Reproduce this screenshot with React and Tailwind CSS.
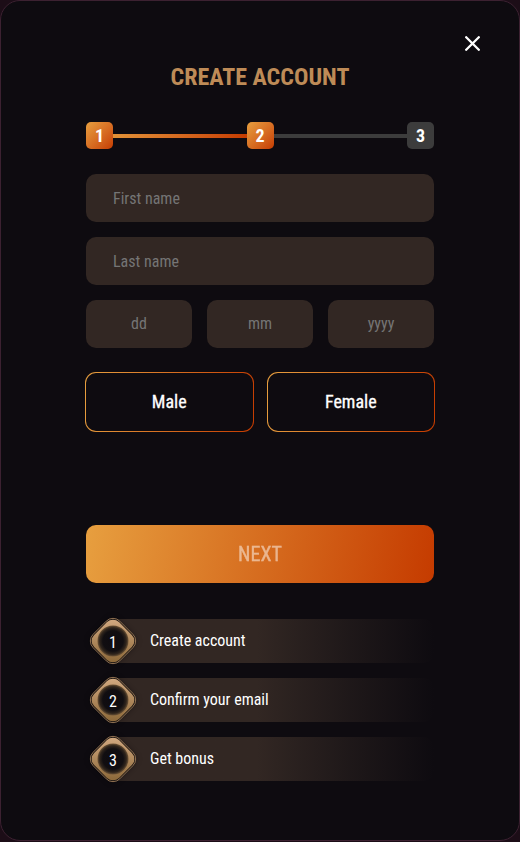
const FIELD = "h-12 w-full min-w-0 rounded-[10px] bg-[#322723] text-base text-white outline-none placeholder:text-[#757575]";

function CloseIcon() {
  return (
    <svg width="15" height="15" viewBox="0 0 15 15" fill="none" stroke="#fff" strokeWidth="2.3" strokeLinecap="round">
      <path d="M1.2 1.2l12.6 12.6M13.8 1.2L1.2 13.8" />
    </svg>
  );
}

function StepBox({ n, active }) {
  return (
    <div
      className={
        "flex size-[27px] shrink-0 items-center justify-center rounded-[5px] text-lg leading-none font-bold text-white " +
        (active ? "bg-linear-135 from-[#e79f3f] to-[#c53b00]" : "bg-[#3c3c3c]")
      }
    >
      {n}
    </div>
  );
}

function GenderButton({ label }) {
  return (
    <button className="h-[60px] flex-1 rounded-[11px] bg-linear-[100deg] from-[#e79f3f] to-[#c53b00] p-px">
      <span className="flex size-full items-center justify-center rounded-[10px] bg-[#0e0b10] text-lg text-white [-webkit-text-stroke:0.3px_#fff]">
        {label}
      </span>
    </button>
  );
}

function Medal({ n }) {
  const id = "gold" + n;
  return (
    <div className="relative size-[46px] shrink-0">
      <svg width="46" height="46" viewBox="0 0 46 46" className="absolute inset-0 overflow-visible">
        <defs>
          <linearGradient id={id} x1="0" y1="0" x2="1" y2="1">
            <stop offset="0.1" stopColor="#cfa67d" />
            <stop offset="0.9" stopColor="#8f6b3c" />
          </linearGradient>
          <radialGradient id={id + "c"}>
            <stop offset="0" stopColor="#0e0b10" />
            <stop offset="0.66" stopColor="#110e11" />
            <stop offset="0.86" stopColor="#30251c" />
            <stop offset="1" stopColor="#6e5436" />
          </radialGradient>
          <filter id={id + "s"} x="-30%" y="-30%" width="160%" height="160%">
            <feGaussianBlur stdDeviation="3" />
          </filter>
        </defs>
        <rect x="5" y="5" width="36" height="36" rx="8" transform="rotate(45 23 23)" fill="#0e0b10" opacity="0.5" filter={"url(#" + id + "s)"} />
        <rect x="4.2" y="4.2" width="37.6" height="37.6" rx="9.5" transform="rotate(45 23 23)" fill="#16100e" stroke="#a88460" strokeWidth="0.8" />
        <rect x="5.4" y="5.4" width="35.2" height="35.2" rx="8.5" transform="rotate(45 23 23)" fill={"url(#" + id + ")"} />
        <circle cx="23" cy="23" r="15.5" fill={"url(#" + id + "c)"} />
      </svg>
      <span className="relative flex size-full items-center justify-center pt-[3px] text-base leading-none text-white">{n}</span>
    </div>
  );
}

function Stage({ n, label }) {
  return (
    <li className="ml-[23px] flex h-11 items-center rounded-r-[10px] bg-linear-to-r from-[#322723] from-45% to-[#0e0b10] to-100%">
      <div className="-ml-[23px]">
        <Medal n={n} />
      </div>
      <span className="ml-[14px] text-base leading-none text-white">{label}</span>
    </li>
  );
}

export default function App() {
  return (
    <div className="h-[842px] w-[520px] bg-[#1c0d17] font-['Roboto_Condensed','Roboto',sans-serif] font-stretch-condensed">
      <main className="flex h-[841px] flex-col rounded-[20px] border border-[#3c2131] bg-[#0e0b10] px-[85px]">
        <div className="-mr-[46px] flex h-[57px] items-end justify-end pb-[7px]">
          <button aria-label="Close"><CloseIcon /></button>
        </div>
        <h1 className="mt-1 text-center text-2xl leading-[30px] font-bold text-[#be8b57]">CREATE ACCOUNT</h1>
        <div className="mt-[30px] flex items-center">
          <StepBox n={1} active />
          <div className="h-1 flex-1 bg-linear-to-r from-[#e29237] to-[#c53b00]" />
          <StepBox n={2} active />
          <div className="h-1 flex-1 bg-[#3c3c3c]" />
          <StepBox n={3} />
        </div>
        <form className="mt-[25px] flex flex-col">
          <div className="flex flex-col gap-[15px]">
            <input className={FIELD + " px-[27px]"} placeholder="First name" />
            <input className={FIELD + " px-[27px]"} placeholder="Last name" />
            <div className="flex gap-[15px]">
              <input className={FIELD + " pb-px text-center"} placeholder="dd" />
              <input className={FIELD + " pb-px text-center"} placeholder="mm" />
              <input className={FIELD + " pb-px text-center"} placeholder="yyyy" />
            </div>
          </div>
          <div className="-mx-px mt-6 flex gap-[13px]">
            <GenderButton label="Male" />
            <GenderButton label="Female" />
          </div>
          <button type="button" className="mt-[93px] h-[58px] rounded-[10px] bg-linear-[100deg] from-[#e79f3f] to-[#c53b00] text-xl text-white">
            <span className="opacity-50 [-webkit-text-stroke:0.35px_#fff]">NEXT</span>
          </button>
        </form>
        <ol className="mt-9 ml-[4px] flex flex-col gap-[15px]">
          <Stage n={1} label="Create account" />
          <Stage n={2} label="Confirm your email" />
          <Stage n={3} label="Get bonus" />
        </ol>
      </main>
    </div>
  );
}
